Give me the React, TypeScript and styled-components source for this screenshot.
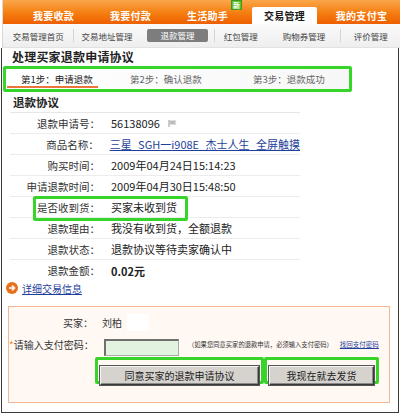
import styled, { createGlobalStyle } from "styled-components"

const Global = createGlobalStyle`
  body {
    margin: 0;
    background: white;
    font-family: "Noto Sans CJK SC", "Noto Sans", sans-serif;
    color: #333;
  }
`

const Page = styled.div`
  width: 400px;
  height: 416px;
  overflow: hidden;
  background: white;
`

const TabBar = styled.div`
  height: 24px;
  margin-left: 2px;
  padding-left: 12px;
  border-left: 1px solid #d8d8d8;
  display: flex;
  align-items: flex-end;
  background: linear-gradient(#fba64a, #f57d10 55%, #ee5f00);
`

const Tab = styled.div`
  position: relative;
  width: 78px;
  height: 24px;
  display: flex;
  align-items: flex-end;
  justify-content: center;
`

const TabLabel = styled.span<{ $active?: boolean }>`
  width: 65px;
  height: 17px;
  line-height: 17px;
  text-align: center;
  font-size: 10px;
  font-weight: bold;
  letter-spacing: 0.3px;
  color: ${(p) => (p.$active ? "#1a1a1a" : "white")};
  background: ${(p) => (p.$active ? "white" : "transparent")};
  border-radius: 2px 2px 0 0;
  white-space: nowrap;
`

const NewBadge = styled.span`
  position: absolute;
  left: 62px;
  top: 0;
  width: 11px;
  height: 10px;
  background: #5cc02a;
  border: 1px solid #3d9a18;
  box-sizing: border-box;
  color: white;
  font-size: 7px;
  line-height: 8px;
  text-align: center;
  font-weight: bold;
`

const SubNav = styled.div`
  height: 24px;
  margin-left: 2px;
  border-left: 1px solid #d8d8d8;
  display: flex;
  align-items: center;
  background: linear-gradient(#fafafa, #eeeeee);
  border-bottom: 1px solid #e2e2e2;
  box-sizing: border-box;
`

const SubItem = styled.div<{ $w: number; $sep?: boolean }>`
  width: ${(p) => p.$w}px;
  height: 13px;
  display: flex;
  align-items: center;
  justify-content: center;
  font-size: 8.5px;
  color: #444;
  border-left: ${(p) => (p.$sep ? "1px solid #d4d4d4" : "1px solid transparent")};
  box-sizing: border-box;
  white-space: nowrap;
`

const SubActive = styled.span`
  width: 61px;
  height: 13px;
  line-height: 13px;
  text-align: center;
  background: #7d7d7d;
  border-radius: 2px;
  color: white;
`

const Main = styled.div`
  height: 365px;
  margin-left: 1px;
  width: 398px;
  border: 1px solid #3a3a3a;
  border-top: none;
  box-sizing: border-box;
`

const Title = styled.div`
  height: 18px;
  line-height: 18px;
  padding-left: 10px;
  font-size: 12px;
  font-weight: bold;
  color: #222;
  letter-spacing: 0.2px;
`

const StepBox = styled.div`
  margin-left: 1px;
  width: 349px;
  height: 26px;
  border: 3px solid #37d52a;
  border-radius: 2px;
  box-sizing: border-box;
  background: linear-gradient(90deg, #ffffff, #f7f7f7);
  display: flex;
  align-items: flex-start;
  padding-left: 1px;
`

const Step = styled.div<{ $active?: boolean; $w: number; $pad: number; $ml: number }>`
  width: ${(p) => p.$w}px;
  height: 19px;
  margin-left: ${(p) => p.$ml}px;
  padding-top: 3px;
  padding-left: ${(p) => p.$pad}px;
  line-height: 14px;
  box-sizing: border-box;
  font-size: 9.5px;
  white-space: nowrap;
  color: ${(p) => (p.$active ? "#222" : "#666")};
  border-bottom: 2px solid ${(p) => (p.$active ? "#e9743e" : "transparent")};
`

const Table = styled.div`
  margin-left: 8px;
  width: 290px;
`

const Heading = styled.div`
  height: 20px;
  line-height: 20px;
  padding-left: 3px;
  font-size: 11.5px;
  font-weight: bold;
  color: #222;
  border-bottom: 1px solid #e6e6e6;
`

const Row = styled.div<{ $last?: boolean; $mark?: boolean }>`
  position: relative;
  height: 21px;
  display: flex;
  align-items: center;
  font-size: 10.5px;
  border-bottom: ${(p) => (p.$last ? "none" : "1px solid #ececec")};
  box-sizing: border-box;
  white-space: nowrap;
  &::before {
    content: "";
    display: ${(p) => (p.$mark ? "block" : "none")};
    position: absolute;
    left: 23px;
    top: -1px;
    width: 155px;
    height: 25px;
    border: 3px solid #37d52a;
    border-radius: 2px;
    box-sizing: border-box;
  }
`

const Label = styled.span`
  width: 90px;
  text-align: right;
  color: #333;
`

const Value = styled.span<{ $bold?: boolean }>`
  margin-left: 11px;
  color: #222;
  font-size: 11px;
  font-weight: ${(p) => (p.$bold ? "bold" : "normal")};
  display: flex;
  align-items: center;
  gap: 8px;
`

const Link = styled.a`
  color: #1f3f9c;
  text-decoration: underline;
  word-spacing: 4px;
`

const MoreRow = styled.div`
  height: 14px;
  margin-left: 4px;
  display: flex;
  align-items: center;
  gap: 4px;
  font-size: 10px;
`

const PayBox = styled.div`
  margin: 11px 0 0 6px;
  width: 382px;
  height: 97px;
  border: 1px solid #f0b896;
  background: #fff8f3;
  box-sizing: border-box;
  padding-top: 5px;
`

const FormRow = styled.div<{ $h: number }>`
  height: ${(p) => p.$h}px;
  display: flex;
  align-items: center;
  font-size: 10px;
  white-space: nowrap;
`

const FormLabel = styled.span`
  width: 84px;
  text-align: right;
  color: #333;
`

const Star = styled.span`
  color: #f08a3c;
`

const Hidden = styled.span`
  width: 22px;
  height: 17px;
  margin-left: 5px;
  background: white;
`

const PwdInput = styled.input`
  margin: 6px 0 0 11px;
  width: 75px;
  height: 17px;
  box-sizing: border-box;
  background: #e2f4e0;
  border: 1px solid #aaa;
  border-top: 2px solid #6f6f6f;
  border-left: 2px solid #6f6f6f;
  padding: 0;
`

const Note = styled.span`
  margin-left: 9px;
  font-size: 6.3px;
  color: #333;
`

const SmallLink = styled.a`
  margin-left: 7px;
  font-size: 6.5px;
  color: #1f3f9c;
  text-decoration: underline;
`

const Buttons = styled.div`
  display: flex;
  padding-left: 86px;
  margin-top: 1px;
`

const Mark = styled.div`
  border: 3px solid #37d52a;
  border-radius: 2px;
  padding: 1px 2px;
  height: 27px;
  box-sizing: border-box;
`

const Button = styled.button<{ $w: number }>`
  width: ${(p) => p.$w}px;
  height: 19px;
  padding: 0;
  font-family: inherit;
  font-size: 10px;
  color: #222;
  background: #d6d3ce;
  border: 1px solid;
  border-color: #f4f4f4 #3a3a3a #3a3a3a #f4f4f4;
  box-shadow: inset -1px -1px 0 #8a8a8a, 0 0 0 1px #555;
`

const Flag = () => (
  <svg width="10" height="7" viewBox="0 0 10 7">
    <path d="M1 0v7" stroke="#999" strokeWidth="1" />
    <path d="M1.5 0.5h7l-1.5 2 1.5 2h-7z" fill="#bdbdbd" />
  </svg>
)

const GoIcon = () => (
  <svg width="12" height="12" viewBox="0 0 12 12">
    <circle cx="6" cy="6" r="6" fill="#e8701c" />
    <path d="M3 6h5M6 3.5L8.5 6 6 8.5" stroke="white" strokeWidth="1.6" fill="none" />
  </svg>
)

const tabs = ["我要收款", "我要付款", "生活助手", "交易管理", "我的支付宝"]

const subs = [
  { t: "交易管理首页", w: 70 },
  { t: "交易地址管理", w: 68, sep: true },
  { t: "退款管理", w: 74, active: true },
  { t: "红包管理", w: 53, sep: true },
  { t: "购物券管理", w: 74 },
  { t: "评价管理", w: 60, sep: true },
]

const rows = [
  { l: "退款申请号：", v: "56138096", flag: true },
  { l: "商品名称：", v: "三星 SGH一i908E 杰士人生 全屏触摸", link: true },
  { l: "购买时间：", v: "2009年04月24日15:14:23" },
  { l: "申请退款时间：", v: "2009年04月30日15:48:50" },
  { l: "是否收到货：", v: "买家未收到货", mark: true },
  { l: "退款理由：", v: "我没有收到货，全额退款" },
  { l: "退款状态：", v: "退款协议等待卖家确认中" },
  { l: "退款金额：", v: "0.02元", bold: true },
]

export default function App() {
  return (
    <Page>
      <Global />
      <TabBar>
        {tabs.map((t, i) => (
          <Tab key={t}>
            <TabLabel $active={i === 3}>{t}</TabLabel>
            {i === 2 && <NewBadge>新</NewBadge>}
          </Tab>
        ))}
      </TabBar>
      <SubNav>
        {subs.map((s) => (
          <SubItem key={s.t} $w={s.w} $sep={s.sep}>
            {s.active ? <SubActive>{s.t}</SubActive> : s.t}
          </SubItem>
        ))}
      </SubNav>
      <Main>
        <Title>处理买家退款申请协议</Title>
        <StepBox>
          <Step $active $w={91} $pad={14} $ml={0}>
            第1步：申请退款
          </Step>
          <Step $w={123} $pad={0} $ml={32}>
            第2步：确认退款
          </Step>
          <Step $w={90} $pad={0} $ml={0}>
            第3步：退款成功
          </Step>
        </StepBox>
        <Table>
          <Heading>退款协议</Heading>
          {rows.map((r, i) => (
            <Row key={r.l} $last={i === rows.length - 1} $mark={r.mark}>
              <Label>{r.l}</Label>
              <Value $bold={r.bold}>
                {r.link ? <Link>{r.v}</Link> : r.v}
                {r.flag && <Flag />}
              </Value>
            </Row>
          ))}
        </Table>
        <MoreRow>
          <GoIcon />
          <Link>详细交易信息</Link>
        </MoreRow>
        <PayBox>
          <FormRow $h={20}>
            <FormLabel>买家：</FormLabel>
            <span style={{ marginLeft: 9 }}>刘柏</span>
            <Hidden />
          </FormRow>
          <FormRow $h={24}>
            <FormLabel>
              <Star>*</Star>请输入支付密码：
            </FormLabel>
            <PwdInput type="password" />
            <Note>（如果您同意买家的退款申请，必须输入支付密码）</Note>
            <SmallLink>找回支付密码</SmallLink>
          </FormRow>
          <Buttons>
            <Mark>
              <Button $w={159}>同意买家的退款申请协议</Button>
            </Mark>
            <Mark>
              <Button $w={105}>我现在就去发货</Button>
            </Mark>
          </Buttons>
        </PayBox>
      </Main>
    </Page>
  )
}
